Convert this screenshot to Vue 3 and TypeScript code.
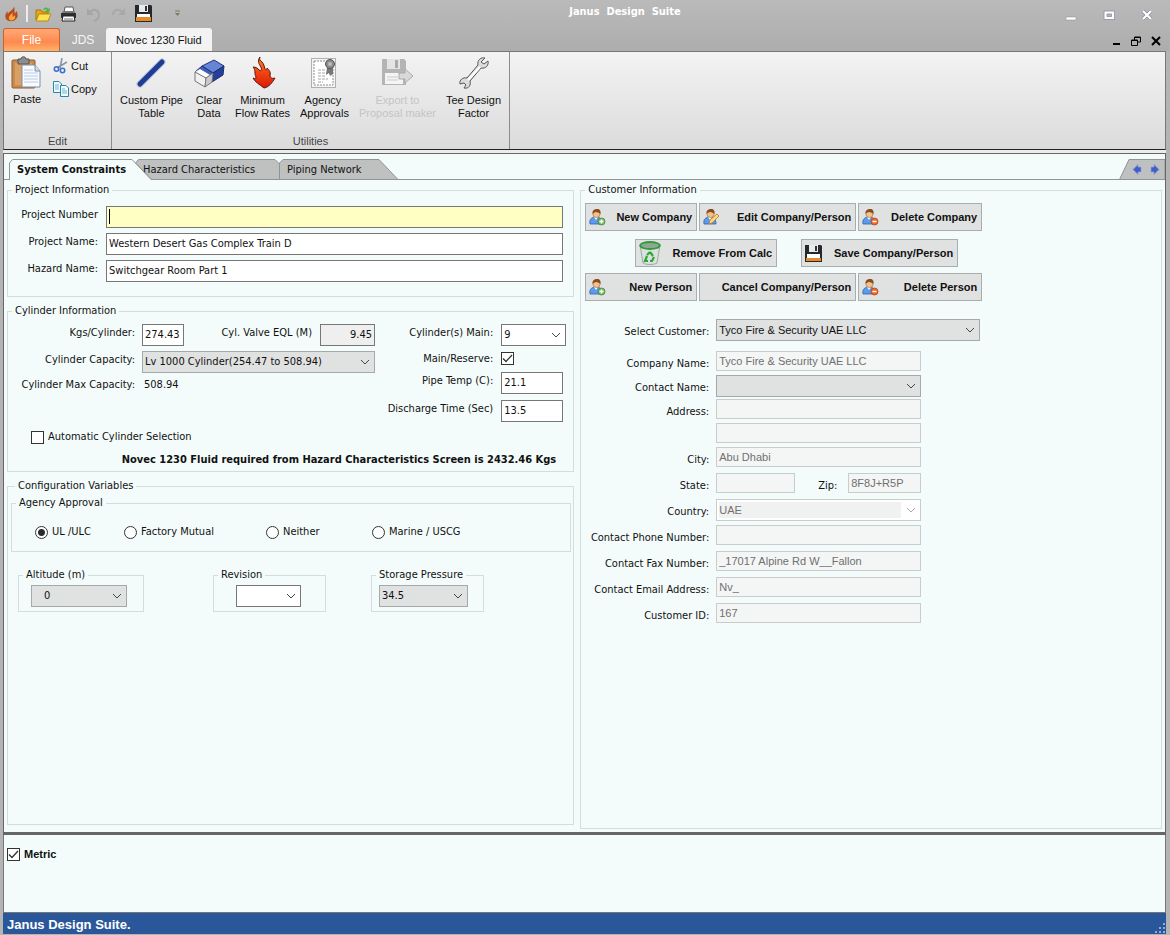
<script setup lang="ts">
import { ref } from 'vue'

interface Project { number: string; name: string; hazard: string }

const project = ref<Project>({
  number: '',
  name: 'Western Desert Gas Complex Train D',
  hazard: 'Switchgear Room Part 1',
})
const reserve = ref(true)
const automatic = ref(false)
const metric = ref(true)
const agency = ref('UL /ULC')
const agencies: string[] = ['UL /ULC', 'Factory Mutual', 'Neither', 'Marine / USCG']
</script>

<template>
  <div class="window">
    <header class="titlebar">
      <div class="quick">
        <svg class="app-icon" width="14" height="16" viewBox="0 0 14 16"><path d="M9 0C9 4 4 5 3 8C2 7 3 5 3 5C0 8 0 10 1 13C3 16 9 16 11 13C14 10 12 8 12 5C11 6 10 7 10 8C9 6 10 3 9 0Z" fill="#b94a1c" /><path d="M8 5C8 8 5 8 4 11C3 14 6 15 8 14C11 13 10 11 10 9L8 11C7 9 8 7 8 5Z" fill="#f9a63c" /></svg>
        <span class="divider"></span>
        <button type="button" aria-label="Open"><svg width="17" height="16" viewBox="0 0 17 16"><path d="M1 14V4H6L7 6H13V8H5L1 14Z" fill="#e2a818" stroke="#a8780c" /><path d="M1 15L4 8H16L13 15Z" fill="#ffe04f" stroke="#b98d14" /><path d="M8 4C9 1 12 1 13 3L15 2L14 7L10 5L12 4C11 3 10 3 8 4Z" fill="#4eb53c" /></svg></button>
        <button type="button" aria-label="Print"><svg width="17" height="16" viewBox="0 0 17 16"><path d="M4 7L5 1H13L14 7Z" fill="#fff" stroke="#555" /><path d="M1 7H16V12H1Z" fill="#303030" /><path d="M2 7H15L14 5H3Z" fill="#777" /><path d="M3 10H14L15 15H2Z" fill="#fff" stroke="#222" /><path d="M4 13H13" stroke="#777" /></svg></button>
        <button type="button" aria-label="Undo"><svg width="17" height="16" viewBox="0 0 17 16"><path d="M5 6C9 2 14 4 14 9C14 12 12 14 9 15" fill="none" stroke="#a5a5a5" stroke-width="2" /><path d="M2 2L2 9H9Z" fill="#a5a5a5" /></svg></button>
        <button type="button" aria-label="Redo"><svg width="17" height="16" viewBox="0 0 17 16"><path d="M12 6C8 2 3 4 3 9" fill="none" stroke="#a8a8a8" stroke-width="2" /><path d="M15 2V9H8Z" fill="#a8a8a8" /></svg></button>
        <button type="button" aria-label="Save"><svg width="17" height="17" viewBox="0 0 17 17"><path d="M0 0H16L17 1V17H0Z" fill="#25292d" /><path d="M4 0H13V7H4Z" fill="#e8ebee" /><path d="M10 1H12V6H10Z" fill="#333" /><path d="M2 9H15V16H2Z" fill="#fff" /><path d="M1 12H16V16H1Z" fill="#e58a2c" /></svg></button>
        <button type="button" class="more" aria-label="Customize toolbar"><svg width="7" height="7" viewBox="0 0 7 7"><path d="M1 1H6" stroke="#7d7a66" /><path d="M1 3H6L3.500 6Z" fill="#7d7a66" /></svg></button>
      </div>
      <h1>Janus&nbsp; Design&nbsp; Suite</h1>
      <div class="caption">
        <button type="button" aria-label="Minimize"><svg width="12" height="12" viewBox="0 0 12 12"><path d="M1 8H11V11H1Z" fill="#fff" stroke="#888" stroke-width=".5" /></svg></button>
        <button type="button" aria-label="Maximize"><svg width="12" height="12" viewBox="0 0 12 12"><path d="M2.500 3.500H10V9H2.500Z" fill="none" stroke="#fff" stroke-width="2.500" /><path d="M1 2H11.500V10.500H1ZM4 5H8.500V7.500H4Z" fill="none" stroke="#85859a" stroke-width=".6" /></svg></button>
        <button type="button" aria-label="Close"><svg width="12" height="12" viewBox="0 0 12 12"><path d="M2 2L10 10M10 2L2 10" stroke="#85859a" stroke-width="3.500" /><path d="M2 2L10 10M10 2L2 10" stroke="#fff" stroke-width="2.300" /></svg></button>
      </div>
    </header>

    <nav class="ribbon-tabs">
      <button type="button" class="file">File</button>
      <button type="button" class="jds">JDS</button>
      <button type="button" class="current">Novec 1230 Fluid</button>
      <div class="mdi">
        <button type="button" aria-label="Minimize document"><svg width="10" height="10" viewBox="0 0 10 10"><path d="M2 8H9" stroke="#000" stroke-width="2" /></svg></button>
        <button type="button" aria-label="Restore document"><svg width="10" height="10" viewBox="0 0 10 10"><path d="M3.500 4V1H9.500V6H7M3 1.500H10M.5 4H6.500V9.500H.5ZM0 4.500H7" fill="none" stroke="#000" /></svg></button>
        <button type="button" aria-label="Close document"><svg width="10" height="10" viewBox="0 0 10 10"><path d="M1 1L9 9M9 1L1 9" stroke="#000" stroke-width="2" /></svg></button>
      </div>
    </nav>

    <section class="ribbon">
      <div class="group edit">
        <div class="tools">
          <button type="button" class="big">
            <svg width="32" height="34" viewBox="0 0 32 34"><rect x="1" y="4" width="23" height="28" rx="1" fill="#c98c50" stroke="#8d5a2a" /><path d="M4 7H21V29H4Z" fill="#d9a066" /><path d="M7 3H10C10 0 15 0 15 3H18V8H7Z" fill="#8d8d8d" stroke="#555" /><path d="M11 9H24L29 15V31H11Z" fill="#f7faff" stroke="#7f8fa5" /><path d="M24 9V15H29" fill="#cfdcf0" stroke="#7f8fa5" /><path d="M13 14H22M13 17H27M13 20H27M13 23H27M13 26H27" stroke="#bccbe0" /></svg>
            <span>Paste</span>
          </button>
          <div class="small-tools">
            <button type="button"><svg width="16" height="16" viewBox="0 0 16 16"><path d="M9 0L7 10M14 4L4 10" stroke="#8a94a5" stroke-width="1.600" /><circle cx="3.500" cy="11" r="2.200" fill="none" stroke="#3b72c8" stroke-width="1.600" /><circle cx="9.500" cy="12.500" r="2.200" fill="none" stroke="#3b72c8" stroke-width="1.600" /></svg>Cut</button>
            <button type="button"><svg width="16" height="16" viewBox="0 0 16 16"><path d="M.5.5H6L8.500 3V11.500H.5Z" fill="#eefaff" stroke="#2a86a8" /><path d="M2 4H6M2 6H6M2 8H6" stroke="#6fb8d2" /><path d="M7.500 4.500H13L15.500 7V15.500H7.500Z" fill="#eefaff" stroke="#2a86a8" /><path d="M9 8H12M9 10H14M9 12H14" stroke="#6fb8d2" /></svg>Copy</button>
          </div>
        </div>
        <p>Edit</p>
      </div>
      <div class="group utilities">
        <div class="tools">
          <button type="button" class="big">
            <svg width="32" height="34" viewBox="0 0 32 34"><path d="M5 28L27 6" stroke="#8fa0d0" stroke-width="7" stroke-linecap="round" opacity=".5" /><path d="M5 28L27 6" stroke="#1f3b92" stroke-width="5" stroke-linecap="round" /></svg>
            <span>Custom Pipe<br>Table</span>
          </button>
          <button type="button" class="big">
            <svg width="32" height="34" viewBox="0 0 32 34"><path d="M9 10L21 4L31 10L20 17Z" fill="#6685d6" stroke="#1f3278" stroke-linejoin="round" /><path d="M31 10L30 19L19 26L20 17Z" fill="#24409b" stroke="#1b2d70" stroke-linejoin="round" /><path d="M9 10L20 17L13 22L2 16Z" fill="#3d5fba" stroke="#1f3278" stroke-linejoin="round" /><path d="M7 13L17 19L13 22L2 16Z" fill="#fff" /><path d="M2 16L13 22L12 31L2 25Z" fill="#f1f1f1" stroke="#777" stroke-linejoin="round" /><path d="M13 22L20 17L19 26L12 31Z" fill="#cacaca" stroke="#777" stroke-linejoin="round" /></svg>
            <span>Clear<br>Data</span>
          </button>
          <button type="button" class="big">
            <svg width="32" height="34" viewBox="0 0 32 34"><defs><linearGradient id="fire" x1="0" y1="0" x2="0" y2="1"><stop offset="0" stop-color="#ff8a1c" /><stop offset=".5" stop-color="#f14412" /><stop offset="1" stop-color="#d81a08" /></linearGradient></defs><path d="M13 1C10 5 12 8 14 11C15 14 14 16 12 14C11 12 8 11 6 11C9 14 7 17 9 21C9 23 8 23 6 22C8 26 12 28 17 32C22 31 25 27 28 22C25 23 23 22 23 19C24 16 22 14 20 12C20 14 19 15 18 13C17 10 17 8 15 6C13 5 12 3 13 1Z" fill="url(#fire)" stroke="#641008" stroke-linejoin="round" /></svg>
            <span>Minimum<br>Flow Rates</span>
          </button>
          <button type="button" class="big">
            <svg width="32" height="34" viewBox="0 0 32 34"><rect x="3.500" y="2.500" width="24" height="29" fill="#f5f5f5" stroke="#b0b0b0" /><rect x="6" y="5" width="19" height="24" fill="#fff" stroke="#8e8e8e" stroke-dasharray="2 1" /><path d="M10 14H17M10 17H20M10 20H18M10 23H20M10 26H15" stroke="#a5a5a5" stroke-dasharray="3 1" /><path d="M19 11L18 19L21 17L22 20L25 18V11Z" fill="#777" /><circle cx="22" cy="8" r="4.500" fill="#8b8b8b" stroke="#555" /><circle cx="22" cy="8" r="2" fill="#bbb" /></svg>
            <span>Agency&nbsp;<br>Approvals</span>
          </button>
          <button type="button" class="big" disabled>
            <svg width="34" height="34" viewBox="0 0 34 34"><path d="M2 3H24L26 5V29H2Z" fill="#b4b4b4" /><path d="M7 3H20V13H7Z" fill="#e4e4e4" /><path d="M15 4H18V12H15Z" fill="#aaa" /><path d="M5 17H23V28H5Z" fill="#f4f4f4" /><path d="M7 21H18M7 24H18" stroke="#ccc" /><path d="M19 17H25V13L33 20L25 27V23H19Z" fill="#d9d9d9" stroke="#aaa" /></svg>
            <span>Export to<br>Proposal maker</span>
          </button>
          <button type="button" class="big">
            <svg width="32" height="34" viewBox="0 0 32 34"><path d="M27 2C23 1 19 4 20 9L9 22C5 21 1 24 2 28L6 27L8 29L6 32C11 33 13 29 12 25L23 12C28 13 31 9 30 5L26 8L23 6Z" fill="#dcdcdc" stroke="#555" stroke-linejoin="round" /><path d="M10 24L22 11" stroke="#fff" stroke-width="2" /></svg>
            <span>Tee Design<br>Factor</span>
          </button>
        </div>
        <p>Utilities</p>
      </div>
    </section>

    <main class="page">
      <div class="tabs">
        <button type="button" class="tab first"><svg width="143" height="21" viewBox="0 0 143 21"><path d="M0 21V4L3 .5H123L142 20.500V21Z" fill="#f4fcfb" /><path d="M.5 21V4L3.500 .5H123L142 20.500" fill="none" stroke="#8f9494" /></svg><span>System Constraints</span></button>
        <button type="button" class="tab second"><svg width="145" height="21" viewBox="0 0 145 21"><path d="M.5 4L3.500 .5H140L144.500 5V20.500H17Z" fill="#bfc0c0" stroke="#8f9494" /></svg><span>Hazard Characteristics</span></button>
        <button type="button" class="tab third"><svg width="120" height="21" viewBox="0 0 120 21"><path d="M.5 20.500V4L4 .5H100L119 20.500Z" fill="#bfc0c0" stroke="#8f9494" /></svg><span>Piping Network</span></button>
        <div class="arrows">
          <svg class="arrows-shape" width="46" height="21" viewBox="0 0 46 21"><path d="M.5 20.500L10 .5H46V20.500Z" fill="#bfc0c0" stroke="#8f9494" /></svg>
          <button type="button" aria-label="Previous tab"><svg width="10" height="11" viewBox="0 0 10 11"><path d="M1 5.500L6 .5V3H9V8H6V10.500Z" fill="#3f5fc4" stroke="#8ea2dd" stroke-width=".7" /></svg></button>
          <button type="button" aria-label="Next tab"><svg width="10" height="11" viewBox="0 0 10 11"><path d="M9 5.500L4 .5V3H1V8H4V10.500Z" fill="#3f5fc4" stroke="#8ea2dd" stroke-width=".7" /></svg></button>
        </div>
      </div>

      <div class="columns">
        <div class="left">
          <fieldset class="project">
            <legend>Project Information</legend>
            <label for="pnum">Project Number</label>
            <div class="caret-box"><input id="pnum" v-model="project.number" class="active" type="text"><span class="caret"></span></div>
            <label for="pname">Project Name:</label>
            <input id="pname" v-model="project.name" type="text">
            <label for="hname">Hazard Name:</label>
            <input id="hname" v-model="project.hazard" type="text">
          </fieldset>

          <fieldset class="cylinder">
            <legend>Cylinder Information</legend>
            <div class="cyl-cols">
              <div class="cyl-left">
                <label for="kgs">Kgs/Cylinder:</label>
                <div class="cyl-pair">
                  <input id="kgs" class="kgs" type="text" value="274.43">
                  <label for="eql">Cyl. Valve EQL (M)</label>
                  <input id="eql" class="eql" type="text" value="9.45" readonly>
                </div>
                <label for="cap">Cylinder Capacity:</label>
                <select id="cap" class="grey"><option>Lv 1000 Cylinder(254.47 to 508.94)</option></select>
                <span class="caption-text">Cylinder Max Capacity:</span>
                <output>508.94</output>
              </div>
              <div class="cyl-right">
                <label for="cmain">Cylinder(s) Main:</label>
                <select id="cmain"><option>9</option></select>
                <label for="reserve" class="tick-label">Main/Reserve:</label>
                <input id="reserve" v-model="reserve" type="checkbox">
                <label for="temp">Pipe Temp (C):</label>
                <input id="temp" type="text" value="21.1">
                <label for="time">Discharge Time (Sec)</label>
                <input id="time" type="text" value="13.5">
              </div>
            </div>
            <label class="check auto"><input v-model="automatic" type="checkbox">Automatic Cylinder Selection</label>
            <p class="required">Novec 1230 Fluid required from Hazard Characteristics Screen is 2432.46 Kgs</p>
          </fieldset>

          <fieldset class="config">
            <legend>Configuration Variables</legend>
            <fieldset class="agency">
              <legend>Agency Approval</legend>
              <div class="agency-options">
                <label v-for="a in agencies" :key="a" class="check"><input v-model="agency" type="radio" name="agency" :value="a">{{ a }}</label>
              </div>
            </fieldset>
            <div class="small-sets">
              <fieldset class="altitude">
                <legend>Altitude (m)</legend>
                <select class="grey" aria-label="Altitude (m)"><option>0</option></select>
              </fieldset>
              <fieldset class="revision">
                <legend>Revision</legend>
                <select aria-label="Revision"><option></option></select>
              </fieldset>
              <fieldset class="pressure">
                <legend>Storage Pressure</legend>
                <select class="grey" aria-label="Storage Pressure"><option>34.5</option></select>
              </fieldset>
            </div>
          </fieldset>
        </div>

        <fieldset class="customer">
          <legend>Customer Information</legend>
          <svg class="defs" width="0" height="0" aria-hidden="true">
            <symbol id="person" viewBox="0 0 17 17"><path d="M1 15C0 10 3 8 7 8C11 8 13 10 13 15Z" fill="#5b9bea" stroke="#2d62b5" stroke-width=".8" /><path d="M5 8L7 11L9 8Z" fill="#fff" /><circle cx="7.500" cy="5" r="3.600" fill="#f2c08c" stroke="#a2672e" stroke-width=".6" /><path d="M3.500 5C3 1 6 0 8 0C11 0 12 2 11.500 5C10 4 9 3 7 3C6 3 4 4 3.500 5Z" fill="#8a4c1c" /></symbol>
          </svg>
          <div class="buttons three">
            <button type="button"><svg width="17" height="17" viewBox="0 0 17 17"><use href="#person" width="17" height="17" /><circle cx="12.500" cy="12.500" r="3.500" fill="#7cbf6a" stroke="#2f7d2a" stroke-width=".7" /><path d="M12.500 10.500V14.500M10.500 12.500H14.500" stroke="#fff" stroke-width="1.300" /></svg><span>New Company</span></button>
            <button type="button"><svg width="17" height="17" viewBox="0 0 17 17"><use href="#person" width="17" height="17" /><path d="M6 15L7 11L14 5L16 7L9 14Z" fill="#ffd978" stroke="#b8792a" stroke-width=".8" /></svg><span>Edit Company/Person</span></button>
            <button type="button"><svg width="17" height="17" viewBox="0 0 17 17"><use href="#person" width="17" height="17" /><circle cx="12.500" cy="12.500" r="3.500" fill="#ee6a2a" stroke="#b23c10" stroke-width=".7" /><path d="M10.500 12.500H14.500" stroke="#fff" stroke-width="1.400" /></svg><span>Delete Company</span></button>
          </div>
          <div class="buttons two">
            <button type="button"><svg width="22" height="24" viewBox="0 0 22 24"><path d="M1 4L4 22C7 24 15 24 18 22L21 4Z" fill="#d9e2dc" stroke="#8f9a93" stroke-width=".8" /><ellipse cx="11" cy="4.500" rx="9.800" ry="3.500" fill="#8fa894" stroke="#2f9a3a" stroke-width="1.800" /><path d="M11 11L14 15M15 16L13 20H11M9 20H6L8 15M8 14L11 11" fill="none" stroke="#2fa53a" stroke-width="2.200" /></svg><span>Remove From Calc</span></button>
            <button type="button"><svg width="17" height="17" viewBox="0 0 17 17"><path d="M0 0H16L17 1V17H0Z" fill="#25292d" /><path d="M4 0H13V7H4Z" fill="#e8ebee" /><path d="M10 1H12V6H10Z" fill="#333" /><path d="M2 9H15V16H2Z" fill="#fff" /><path d="M1 13H16V16H1Z" fill="#e58a2c" /></svg><span>Save Company/Person</span></button>
          </div>
          <div class="buttons three">
            <button type="button"><svg width="17" height="17" viewBox="0 0 17 17"><use href="#person" width="17" height="17" /><circle cx="12.500" cy="12.500" r="3.500" fill="#7cbf6a" stroke="#2f7d2a" stroke-width=".7" /><path d="M12.500 10.500V14.500M10.500 12.500H14.500" stroke="#fff" stroke-width="1.300" /></svg><span>New Person</span></button>
            <button type="button"><span>Cancel Company/Person</span></button>
            <button type="button"><svg width="17" height="17" viewBox="0 0 17 17"><use href="#person" width="17" height="17" /><circle cx="12.500" cy="12.500" r="3.500" fill="#ee6a2a" stroke="#b23c10" stroke-width=".7" /><path d="M10.500 12.500H14.500" stroke="#fff" stroke-width="1.400" /></svg><span>Delete Person</span></button>
          </div>

          <div class="details">
            <label for="cust">Select Customer:</label>
            <select id="cust" class="grey wide"><option>Tyco Fire &amp; Security UAE LLC</option></select>
            <label for="company">Company Name:</label>
            <input id="company" type="text" value="Tyco Fire &amp; Security UAE LLC" disabled>
            <label for="contact">Contact Name:</label>
            <select id="contact" class="grey"><option></option></select>
            <label for="addr">Address:</label>
            <input id="addr" type="text" disabled>
            <span></span>
            <input type="text" aria-label="Address line 2" disabled>
            <label for="city">City:</label>
            <input id="city" type="text" value="Abu Dhabi" disabled>
            <label for="state">State:</label>
            <div class="state-zip">
              <input id="state" class="state" type="text" disabled>
              <label for="zip">Zip:</label>
              <input id="zip" class="zip" type="text" value="8F8J+R5P" disabled>
            </div>
            <label for="country">Country:</label>
            <select id="country" disabled><option>UAE</option></select>
            <label for="phone">Contact Phone Number:</label>
            <input id="phone" type="text" disabled>
            <label for="fax">Contact Fax Number:</label>
            <input id="fax" type="text" value="_17017 Alpine Rd W__Fallon" disabled>
            <label for="email">Contact Email Address:</label>
            <input id="email" type="text" value="Nv_" disabled>
            <label for="cid">Customer ID:</label>
            <input id="cid" type="text" value="167" disabled>
          </div>
        </fieldset>
      </div>
    </main>

    <section class="lower">
      <label class="check"><input v-model="metric" type="checkbox">Metric</label>
    </section>

    <footer class="status">
      <span>Janus Design Suite.</span>
      <svg width="12" height="12" viewBox="0 0 12 12"><path d="M9 1h2v2H9zM9 5h2v2H9zM9 9h2v2H9zM5 5h2v2H5zM5 9h2v2H5zM1 9h2v2H1z" fill="#8fa9dc" /></svg>
    </footer>
  </div>
</template>

<style>
body { background: #b2b2b2; }
</style>

<style scoped>
* { box-sizing: border-box; }
.window {
  min-height: 100vh;
  display: flex;
  flex-direction: column;
  padding: 0 4px 1px 3px;
  background: linear-gradient(#bababa, #adadad 50px, #b4b4b4 52px);
  font: 11px/14px "DejaVu Sans Condensed", "DejaVu Sans", sans-serif;
  color: #111;
}
button { font: inherit; color: inherit; background: none; border: 0; padding: 0; margin: 0; }
svg { display: block; flex: none; }
p, h1 { margin: 0; }

.titlebar { height: 28px; display: grid; grid-template-columns: 7fr auto 6fr; align-items: start; }
.quick { display: flex; align-items: center; gap: 8px; padding: 5px 0 0 2px; height: 22px; }
.quick .divider { width: 2px; height: 17px; margin: 0 -1px; background: #ececec; }
.quick .more { margin-left: 14px; }
h1 { font: bold 11px/24px "DejaVu Sans Condensed", sans-serif; color: #fff; }
.caption { display: flex; justify-content: flex-end; gap: 26px; padding: 9px 13px 0 0; }

.ribbon-tabs { height: 23px; display: flex; font: 11px/22px "Liberation Sans", Arial, sans-serif; }
.file { width: 57px; border: 1px solid #c9632c; border-bottom: 0; border-radius: 3px 3px 0 0; background: linear-gradient(#ffa878, #fd8a4e 60%, #ffb36b); color: #fff; font-size: 12px; }
.jds { width: 46px; color: #f6f6f6; font-size: 12px; }
.current { padding: 0 10px; background: #f3f3f3; border-radius: 3px 3px 0 0; }
.mdi { margin-left: auto; display: flex; gap: 10px; padding: 2px 5px 0 0; }

.ribbon { height: 99px; display: flex; border: 1px solid #777; border-bottom-color: #222; box-shadow: 0 3px #ececec; background: linear-gradient(#f3f3f3, #dbdbdb); font: 11px/13px "Liberation Sans", Arial, sans-serif; }
.group { display: flex; flex-direction: column; border-right: 1px solid #8c8c8c; }
.group p { margin-top: auto; padding-bottom: 1px; text-align: center; color: #444; }
.edit { width: 108px; }
.tools { display: flex; padding-top: 4px; }
.utilities { padding: 0 8px; }
.utilities .tools { gap: 10px; }
.big { display: flex; flex-direction: column; align-items: center; gap: 4px; min-width: 32px; text-align: center; }
.big:disabled { color: #c4c4c4; }
.edit .tools { padding-left: 7px; gap: 10px; }
.edit .big { gap: 3px; justify-content: flex-start; }
.small-tools { display: flex; flex-direction: column; gap: 7px; padding-top: 2px; }
.small-tools button { display: flex; align-items: center; gap: 2px; }

.page { flex: 1; display: flex; flex-direction: column; margin-top: 3px; border: 1px solid #666; border-bottom: 3px solid #666; background: #f4fcfb; }
.tabs { display: flex; margin-top: 5px; height: 21px; padding-left: 5px; box-shadow: inset 0 -1px #8f9494; }
.tab { position: relative; height: 21px; text-align: left; }
.tab svg { position: absolute; left: 0; top: 0; }
.tab span { position: relative; padding-left: 8px; }
.first { width: 126px; z-index: 1; font-weight: bold; }
.second { width: 144px; }
.third { width: 120px; }
.arrows { position: relative; margin-left: auto; width: 46px; display: flex; align-items: center; justify-content: flex-end; gap: 8px; padding-right: 5px; }
.arrows-shape { position: absolute; left: 0; top: 0; }
.arrows button { position: relative; }

.columns { flex: 1; display: grid; grid-template-columns: minmax(0, 39fr) minmax(0, 40fr); gap: 6px; padding: 3px; }
.left { display: flex; flex-direction: column; gap: 7px; padding-bottom: 4px; }
fieldset { margin: 0; padding: 0; min-width: 0; border: 1px solid #d3dddd; }
legend { margin-left: 4px; padding: 0 3px; line-height: 14px; }

input[type="text"], select {
  width: 100%; height: 22px; margin: 0; padding: 0 2px 1px; border: 1px solid #777; border-radius: 0;
  background: #fff; color: #111; font: inherit; outline: 0;
}
select {
  appearance: none; padding: 0 20px 0 2px;
  background: #fff url("data:image/svg+xml,%3Csvg xmlns='http://www.w3.org/2000/svg' width='10' height='6'%3E%3Cpath d='M1 1L5 5L9 1' fill='none' stroke='%23444'/%3E%3C/svg%3E") no-repeat right 4px center;
}
select.grey { background-color: #e0e1e1; border-color: #a5a9a9; }
input[type="checkbox"], input[type="radio"] { appearance: none; flex: none; width: 13px; height: 13px; margin: 0; border: 1px solid #333; background: #fff no-repeat center; }
input[type="checkbox"]:checked { background-image: url("data:image/svg+xml,%3Csvg xmlns='http://www.w3.org/2000/svg' width='11' height='11'%3E%3Cpath d='M1 5.500L4 8.500L10 2' fill='none' stroke='%23333' stroke-width='1.300'/%3E%3C/svg%3E"); }
input[type="radio"] { border-radius: 50%; }
input[type="radio"]:checked { background-image: radial-gradient(circle, #2b2b2b 3px, transparent 4px); }
.check { display: flex; align-items: center; gap: 4px; white-space: nowrap; }

.project { display: grid; grid-template-columns: 90px minmax(0, 1fr); column-gap: 8px; row-gap: 5px; padding: 9px 10px 14px 0; }
.project label { text-align: right; padding-top: 2px; }
.caret-box { position: relative; }
input.active { background: #ffffc4; }
.caret { position: absolute; left: 3px; top: 3px; width: 1px; height: 15px; background: #000; }

.cylinder { padding: 6px 7px 4px 0; }
.cyl-cols { display: flex; justify-content: space-between; }
.cyl-left { display: grid; grid-template-columns: 127px 233px; column-gap: 7px; row-gap: 5px; align-items: start; align-content: start; }
.cyl-left label, .cyl-right label, .caption-text { padding-top: 2px; text-align: right; white-space: nowrap; }
.caption-text { padding-top: 0; }
output { padding-left: 2px; }
.cyl-pair { display: flex; gap: 8px; }
.cyl-pair label { margin-left: auto; }
.cyl-pair .kgs { width: 42px; }
.cyl-pair .eql { width: 55px; background: #efefef; text-align: right; }
.cyl-right { display: grid; grid-template-columns: auto 65px; grid-template-rows: 28px 20px 28px 22px; column-gap: 8px; align-items: start; }
.cyl-right .tick-label { padding-top: 0; }
.cyl-right input[type="text"] { width: 62px; }
.auto { margin: 8px 0 0 23px; }
.required { margin-top: 9px; padding-right: 10px; text-align: right; font-weight: bold; }

.config { flex: 1; padding: 3px 2px 3px 3px; }
.agency-options { display: grid; grid-template-columns: 89px 142px 106px auto; padding: 15px 0 12px 23px; }
.small-sets { display: grid; grid-template-columns: 195px 158px 113px; margin: 16px 0 0 7px; }
.small-sets fieldset { padding: 3px 0 4px; width: 113px; }
.small-sets .altitude { width: 126px; }
.altitude select { width: 96px; margin-left: 12px; padding-left: 12px; }
.revision select { width: 65px; margin-left: 22px; }
.pressure select { width: 89px; margin-left: 7px; }

.customer { padding: 6px 0; }
.defs { position: absolute; }
.buttons { display: grid; gap: 2px; margin-left: 4px; font: bold 11px/14px "Liberation Sans", Arial, sans-serif; }
.buttons.three { grid-template-columns: 112px 157px 124px; }
.buttons.two { grid-template-columns: 142px 157px; gap: 24px; margin: 8px 0 6px 54px; }
.buttons button { height: 28px; display: flex; align-items: center; padding: 0 4px 0 3px; border: 1px solid #a9adad; background: #e0e1e1; }
.buttons button span { margin-left: auto; }
.details {
  display: grid; grid-template-columns: 128px minmax(0, 205px); column-gap: 7px;
  grid-template-rows: 32px repeat(4, 24px) repeat(7, 26px);
  align-items: start; margin-top: 18px;
}
.details label { padding-top: 6px; text-align: right; white-space: nowrap; }
.details input[type="text"] { height: 20px; }
.details input, .details select { font-family: "Liberation Sans", Arial, sans-serif; }
.details .wide { width: 264px; }
.details input:disabled { background: #f4f5f5; border-color: #c9cccc; color: #707070; }
.details select:disabled {
  border-color: #c9cccc; color: #707070; opacity: 1;
  background-image:
    url("data:image/svg+xml,%3Csvg xmlns='http://www.w3.org/2000/svg' width='10' height='6'%3E%3Cpath d='M1 1L5 5L9 1' fill='none' stroke='%23aaa'/%3E%3C/svg%3E"),
    linear-gradient(#f0f1f1, #f0f1f1);
  background-position: right 4px center, 2px 2px;
  background-size: auto, calc(100% - 21px) 16px;
}
.state-zip { display: flex; justify-content: space-between; }
.state-zip .state { width: 79px; }
.state-zip .zip { width: 73px; }
.state-zip label { margin-left: 12px; }

.lower { height: 78px; padding: 12px 3px; border: 1px solid #777; border-top: 0; background: #f4fcfb; font: bold 11px/14px "Liberation Sans", Arial, sans-serif; }
.status { height: 21px; display: flex; justify-content: space-between; align-items: center; padding: 2px 0 0 4px; background: #2a579a; color: #fff; font: bold 13px/18px "Liberation Sans", Arial, sans-serif; }
.status svg { align-self: flex-end; }
</style>
